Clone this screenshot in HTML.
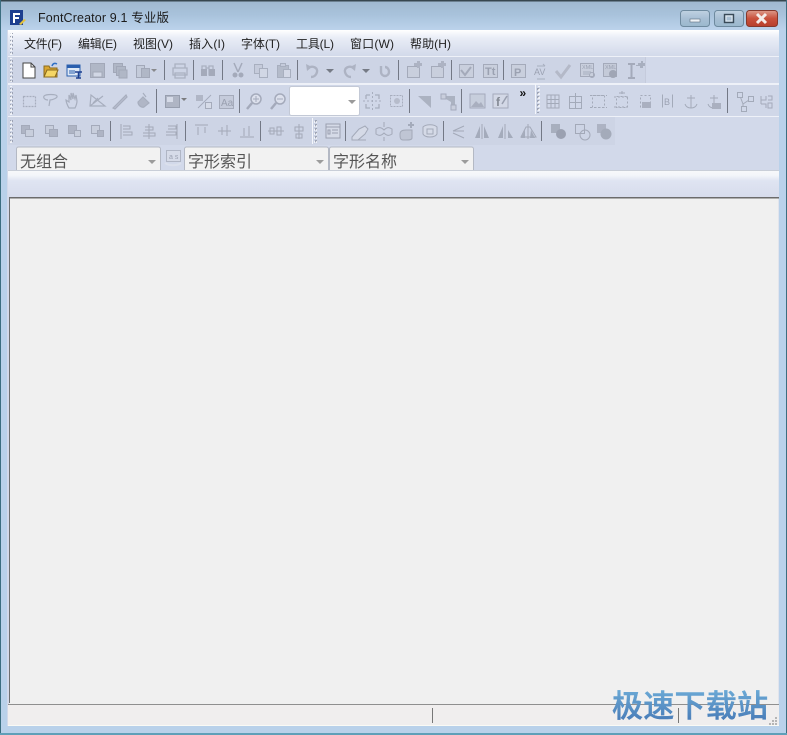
<!DOCTYPE html>
<html><head><meta charset="utf-8"><style>
html,body{margin:0;padding:0;background:#b9d1ea}
svg{display:block;filter:blur(.35px)}
text{font-family:"Liberation Sans","Noto Sans CJK SC",sans-serif}
</style></head><body>
<svg xmlns="http://www.w3.org/2000/svg" width="787" height="735" viewBox="0 0 787 735">
<defs>
<linearGradient id="tb" x1="0" y1="0" x2="0" y2="1"><stop offset="0" stop-color="#9fb8cf"/><stop offset=".5" stop-color="#a9c3dc"/><stop offset="1" stop-color="#bcd3ec"/></linearGradient>
<linearGradient id="mb" x1="0" y1="0" x2="0" y2="1"><stop offset="0" stop-color="#ffffff"/><stop offset=".3" stop-color="#e9edf6"/><stop offset="1" stop-color="#d2d9ea"/></linearGradient>
<linearGradient id="bd" x1="0" y1="0" x2="0" y2="1"><stop offset="0" stop-color="#f8f9fb"/><stop offset=".2" stop-color="#f3f5fa"/><stop offset=".4" stop-color="#dfe4f2"/><stop offset="1" stop-color="#d7dcec"/></linearGradient>
<linearGradient id="wm" x1="0" y1="0" x2="0" y2="1"><stop offset="0" stop-color="#74b6de"/><stop offset="1" stop-color="#4475b3"/></linearGradient>
<linearGradient id="btn" x1="0" y1="0" x2="0" y2="1"><stop offset="0" stop-color="#c0d2e2"/><stop offset=".5" stop-color="#a8bfd4"/><stop offset="1" stop-color="#9ab8cd"/></linearGradient>
<linearGradient id="cl" x1="0" y1="0" x2="0" y2="1"><stop offset="0" stop-color="#dd9a8a"/><stop offset=".5" stop-color="#c9513c"/><stop offset="1" stop-color="#b8402c"/></linearGradient>
<pattern id="gr" width="3" height="4" patternUnits="userSpaceOnUse"><rect width="2" height="2" fill="#9ea4b4"/><rect x="1" y="1" width="2" height="2" fill="#fff" opacity=".7"/></pattern>
</defs>

<!-- frame -->
<rect width="787" height="735" fill="#b9d1ea"/>
<rect width="787" height="30" fill="url(#tb)"/>
<rect x="0" y="0" width="787" height="1.5" fill="#37474f"/>
<rect x="0" y="0" width="1" height="735" fill="#3c6e80"/>
<rect x="786" y="0" width="1" height="735" fill="#3c6e80"/>
<rect x="0" y="733" width="787" height="2" fill="#5f9fb8"/>
<rect x="7" y="30" width="772" height="696" fill="#d2d9ea"/>

<!-- app icon -->
<rect x="10" y="10" width="13" height="15" fill="#1d3f8f"/>
<path d="M13 13h7v2h-5v2h4v2h-4v4h-2z" fill="#fff"/>
<path d="M19 24l5-5 2 1-5 5z" fill="#e4c33f"/>
<text x="38" y="22" font-size="12.500" fill="#1c1c1c" textLength="131" lengthAdjust="spacing">FontCreator 9.1 专业版</text>

<!-- window buttons -->
<rect x="680.500" y="10.500" width="29" height="16" rx="3" fill="url(#btn)" stroke="#6e8a9f"/>
<rect x="690" y="19" width="10" height="3" fill="#eef3f7" stroke="#5a6d7d" stroke-width=".6"/>
<rect x="714.500" y="10.500" width="29" height="16" rx="3" fill="url(#btn)" stroke="#6e8a9f"/>
<rect x="724.500" y="14.500" width="9" height="8" fill="none" stroke="#394a58" stroke-width="1.400"/>
<rect x="726" y="16" width="6" height="5" fill="none" stroke="#e8eef3" stroke-width="1"/>
<rect x="746.500" y="10.500" width="31" height="16" rx="3" fill="url(#cl)" stroke="#86382b"/>
<path d="M757 14l9 9M766 14l-9 9" stroke="#f4ece9" stroke-width="3"/>

<!-- menu -->
<rect x="8" y="30" width="771" height="26" fill="url(#mb)"/>
<rect x="10" y="33" width="3" height="22" fill="url(#gr)"/>
<g font-size="12" fill="#222">
<text x="24" y="48" textLength="38">文件(F)</text>
<text x="78" y="48" textLength="39">编辑(E)</text>
<text x="133" y="48" textLength="40">视图(V)</text>
<text x="189" y="48" textLength="36">插入(I)</text>
<text x="241" y="48" textLength="39">字体(T)</text>
<text x="296" y="48" textLength="38">工具(L)</text>
<text x="350" y="48" textLength="44">窗口(W)</text>
<text x="410" y="48" textLength="41">帮助(H)</text>
</g>

<!-- toolbar bands -->
<rect x="8" y="56" width="771" height="1" fill="#eef1f8"/>
<rect x="8" y="83" width="771" height="2" fill="#eef1f8"/>
<rect x="8" y="57" width="638" height="26" fill="#cdd4e5"/>
<rect x="645" y="57" width="1" height="26" fill="#c5cbdc"/>
<rect x="8" y="85" width="771" height="32" fill="#d0d7e8"/>
<rect x="8" y="116" width="771" height="1" fill="#eef1f8"/>
<rect x="8" y="117" width="607" height="28" fill="#cdd4e5"/>
<rect x="10" y="58" width="3" height="24" fill="url(#gr)"/>
<rect x="10" y="86" width="3" height="29" fill="url(#gr)"/>
<rect x="10" y="119" width="3" height="24" fill="url(#gr)"/>
<rect x="10" y="148" width="3" height="20" fill="url(#gr)"/>
<rect x="535" y="84" width="1" height="30" fill="#f4f6fb"/>
<rect x="537" y="86" width="3" height="27" fill="url(#gr)"/>
<rect x="312" y="118" width="1" height="26" fill="#f4f6fb"/>
<rect x="314" y="119" width="3" height="24" fill="url(#gr)"/>

<!-- separators -->
<g fill="#737885">
<rect x="164" y="60" width="1" height="20"/><rect x="193" y="60" width="1" height="20"/><rect x="222" y="60" width="1" height="20"/><rect x="297" y="60" width="1" height="20"/><rect x="398" y="60" width="1" height="20"/><rect x="451" y="60" width="1" height="20"/><rect x="503" y="60" width="1" height="20"/>
<rect x="156" y="89" width="1" height="24"/><rect x="239" y="89" width="1" height="24"/><rect x="409" y="89" width="1" height="24"/><rect x="461" y="89" width="1" height="24"/><rect x="727" y="88" width="1" height="25"/>
<rect x="110" y="121" width="1" height="20"/><rect x="185" y="121" width="1" height="20"/><rect x="260" y="121" width="1" height="20"/><rect x="345" y="121" width="1" height="20"/><rect x="443" y="121" width="1" height="20"/><rect x="541" y="121" width="1" height="20"/>
</g>

<!-- Row 1 icons -->
<path d="M23 63h8l4 4v11H23z" fill="#fff" stroke="#444"/><path d="M31 63v4h4" fill="none" stroke="#444"/>
<path d="M44 77V66h5l1 2h7v9z" fill="#d9a52f" stroke="#8a6a1d"/><path d="M44 77l3-7h11l-3 7z" fill="#f5d665" stroke="#8a6a1d"/><path d="M52 66c1-3 3-3 5-2" fill="none" stroke="#2d6fc4" stroke-width="1.500"/>
<rect x="67" y="65" width="13" height="11" fill="#dfe9f6" stroke="#2a5fae"/><rect x="67" y="65" width="13" height="3" fill="#2a5fae"/><path d="M69 71h6M69 73h6" stroke="#2a5fae"/><path d="M75 72h7M78.500 72v6M76 78h5" stroke="#1d3f8f" stroke-width="1.500"/>
<g opacity=".8">
<g fill="#aab0bf" stroke="#989eae">
<rect x="90.500" y="63.500" width="14" height="14"/><rect x="93" y="72" width="9" height="5" fill="#d2d8e6"/>
<rect x="113.500" y="63.500" width="9" height="9"/><rect x="116.500" y="66.500" width="9" height="9"/><rect x="119" y="70" width="8" height="8"/>
<rect x="136.500" y="65.500" width="8" height="12" fill="#c3c9d8"/><rect x="141.500" y="68.500" width="8" height="9"/>
</g>
<path d="M151 69h6l-3 3z" fill="#777"/>
<g fill="none" stroke="#a2a8b8" stroke-width="1.300">
<path d="M175 68v-4h10v4M173 68h14v7h-14zM175 73h10v5h-10z"/>
<path d="M202 66h4v9h-4zM209 66h4v9h-4zM206 68h3"/>
</g>
<rect x="201" y="69" width="6" height="7" fill="#9aa0b0"/><rect x="209" y="69" width="6" height="7" fill="#9aa0b0"/>
<path d="M234 63l4 9M242 63l-4 9" stroke="#9aa0b0" stroke-width="1.500"/><circle cx="235" cy="75" r="2.500" fill="#9aa0b0"/><circle cx="241" cy="75" r="2.500" fill="#9aa0b0"/>
<g fill="#c4cad9" stroke="#a0a6b6"><rect x="254.500" y="64.500" width="8" height="9"/><rect x="259.500" y="68.500" width="8" height="9" fill="#d2d8e6"/>
<rect x="277.500" y="65.500" width="11" height="12" fill="#afb5c4"/><rect x="280.500" y="63.500" width="5" height="3"/><rect x="283.500" y="69.500" width="7" height="8" fill="#d6dbe8"/></g>
<g fill="none" stroke="#a6acbb" stroke-width="2.400">
<path d="M308 68c5-3 10 0 9 4s-4 5-6 5"/><path d="M354 68c-5-3-10 0-9 4s4 5 6 5"/><path d="M381 66v6a4 4 0 0 0 8 0c0-3-2-5-4-5"/></g>
<path d="M306 64l1 7 5-4zM356 64l-1 7-5-4z" fill="#a6acbb"/>
<path d="M326 69h8l-4 4zM362 69h8l-4 4z" fill="#61666f"/>
<!-- note icons -->
<g fill="#c9cfdc" stroke="#9aa0b0">
<rect x="407.500" y="66.500" width="12" height="11"/><rect x="431.500" y="66.500" width="12" height="11"/>
<rect x="459.500" y="64.500" width="14" height="13"/><rect x="483.500" y="64.500" width="14" height="13"/>
<rect x="511.500" y="64.500" width="14" height="13"/>
<rect x="580.500" y="63.500" width="13" height="13"/><rect x="603.500" y="63.500" width="13" height="13" fill="#c2c8d6"/>
</g>
<path d="M414 66v-3h3v-2h3v2h2v3h-2v2h-3v-2zM438 66v-3h3v-2h3v2h2v3h-2v2h-3v-2z" fill="#a6acbb"/>
<path d="M461 70l4 5 6-8" fill="none" stroke="#9aa0b0" stroke-width="2"/>
<g font-size="11" fill="#8f95a5" font-weight="bold" font-family="Liberation Serif"><text x="485" y="75">Tt</text><text x="514" y="76">P</text></g>
<text x="534" y="75" font-size="9" fill="#8f95a5">AV</text>
<path d="M556 71l5 6 9-12" fill="none" stroke="#aeb3c1" stroke-width="3"/>
<path d="M537 66h8M545 66l-2-2M537 79h8" stroke="#a0a6b6" fill="none"/>
<text x="582" y="69" font-size="5.500" fill="#8f95a5">XML</text><text x="605" y="69" font-size="5.500" fill="#8f95a5">XML</text>
<path d="M583 72h8M583 74h6" stroke="#a0a6b6"/><circle cx="592" cy="75" r="2.500" fill="none" stroke="#9aa0b0"/>
<path d="M628 64h7M631.500 64v14M628 78h7" stroke="#9aa0b0" stroke-width="2" fill="none"/><path d="M636 65h2v-2h3v-2h2v2h2v3h-2v2h-3v-2h-4z" fill="#a0a6b6"/>
<circle cx="613" cy="74" r="4" fill="#959baa"/>

<!-- Row 2 icons -->
<g fill="none" stroke="#9ea4b4" stroke-width="1.200">
<rect x="23.500" y="96.500" width="12" height="10" stroke-dasharray="2 1"/>
<path d="M44 96c2-2 12-2 13 0s-5 4-7 4l-1 6M48 100c-3 0-5-2-4-4"/>
<path d="M69 108c-2-3-3-7-3-8l3 2v-7l2 5v-7l2 6v-6l2 6 1-4 1 6c0 3-1 5-2 7z"/>
<path d="M90 106h15l-14-11zM90 106l13-10M93 103l5-5"/>
<path d="M113 108l8-8 5-5 1 2-5 5-7 7z" fill="#b3b9c8"/>
<path d="M138 102l5-5 6 6-5 4c-3 1-6-2-6-5z" fill="#a9afbe"/><path d="M143 93l3 4"/>
</g>
<rect x="165.500" y="95.500" width="14" height="12" fill="#a7adbc" stroke="#8a90a0"/><rect x="167" y="97" width="6" height="5" fill="#d8dde9"/>
<path d="M181 98h6l-3 3z" fill="#666"/>
<rect x="196" y="95" width="7" height="6" fill="#a9afbe"/><rect x="205.500" y="102.500" width="6" height="6" fill="#d8dde9" stroke="#9ba1b1"/><path d="M211 95l-13 13" stroke="#9ba1b1"/>
<rect x="219.500" y="95.500" width="14" height="13" fill="#c3c9d8" stroke="#9ba1b1"/><text x="221" y="106" font-size="10" fill="#8d93a3">Aa</text>
<circle cx="256" cy="99" r="5" fill="#dfe3ee" stroke="#9aa0b0" stroke-width="1.500"/><path d="M252 103l-5 6" stroke="#9aa0b0" stroke-width="2.500"/><path d="M253 99h6M256 96v6" stroke="#9aa0b0"/>
<circle cx="280" cy="99" r="5" fill="#dfe3ee" stroke="#9aa0b0" stroke-width="1.500"/><path d="M276 103l-5 6" stroke="#9aa0b0" stroke-width="2.500"/><path d="M277 99h6" stroke="#9aa0b0"/>
<g fill="none" stroke="#9ea4b4">
<path d="M366 95h4M375 95h4v4M379 104v4h-4M370 108h-4v-4M366 99v-4" stroke-width="1.300"/><path d="M372.500 92v18M363 101h18" stroke-dasharray="2 2"/>
<rect x="390.500" y="95.500" width="12" height="11" stroke-dasharray="2 1"/>
</g>
<circle cx="397" cy="101" r="3" fill="#b0b6c5"/>
<path d="M418 96h13v12z" fill="#a3a9b8"/>
<path d="M441 96h14v12h-4v-6z" fill="#a3a9b8"/><rect x="441" y="94" width="5" height="5" fill="#c8cdda" stroke="#9aa0b0"/><rect x="451" y="105" width="5" height="5" fill="#c8cdda" stroke="#9aa0b0"/>
<rect x="470" y="94" width="15" height="14" fill="#c6ccda" stroke="#9aa0b0"/><path d="M471 107l5-6 3 3 2-2 3 5z" fill="#a0a6b6"/>
<rect x="493" y="94" width="15" height="14" fill="#d4d9e6" stroke="#9aa0b0"/><text x="496" y="106" font-size="12" font-weight="bold" fill="#71767f" font-family="Liberation Serif">f</text><path d="M502 104l5-8" stroke="#8c92a1" stroke-width="1.500"/>
<g fill="none" stroke="#999fae">
<path d="M547 95h12v13h-12zM551 95v13M555 95v13M547 99.500h12M547 103.500h12"/>
<path d="M569.500 96.500h12v12h-12zM575.500 93v16M569.500 102.500h12"/>
<path d="M592.500 95.500h12v12h-12zM590 95.500h17M590 107.500h17" stroke-dasharray="2 2"/>
<path d="M616.500 96.500h11v11h-11zM614 97h16M614 107h16" stroke-dasharray="2 2"/><path d="M622 91v3M619 93h6"/>
<path d="M640.500 95.500h10v12h-10z" stroke-dasharray="2 2"/>
<path d="M662.500 94.500v13M672.500 94.500v13"/>
<path d="M691 95v13M687 98h8M685 104c1 3 3 4 6 4s5-1 6-4"/>
<path d="M714 95v13M710 98h8M708 104c1 3 3 4 6 4s5-1 6-4"/>
<path d="M740 96l3 8 6-4M743 104v3"/><rect x="737.500" y="92.500" width="5" height="5" fill="#d0d7e8"/><rect x="748.500" y="96.500" width="5" height="5" fill="#d0d7e8"/><rect x="741.500" y="106.500" width="5" height="5" fill="#d0d7e8"/>
<path d="M761 96v8M766 96v4h-5M768 96h4v4h-4M768 103h4v5h-4zM761 104h5v4"/>
</g>
<rect x="642" y="102" width="9" height="6" fill="#a1a7b7"/><rect x="712" y="103" width="9" height="6" fill="#a1a7b7"/>
<text x="664" y="105" font-size="9" fill="#8f95a5">B</text>

<!-- Row 3 icons -->
<g fill="#c7cddb" stroke="#9aa0b0"><rect x="21.500" y="125.500" width="8" height="8" fill="#a7adbc"/><rect x="25.500" y="129.500" width="8" height="7"/>
<rect x="45.500" y="125.500" width="8" height="8"/><rect x="49.500" y="129.500" width="8" height="7" fill="#a7adbc"/>
<rect x="68.500" y="125.500" width="8" height="8" fill="#a7adbc"/><rect x="74.500" y="130.500" width="6" height="6"/>
<rect x="91.500" y="125.500" width="8" height="8"/><rect x="97.500" y="130.500" width="6" height="6" fill="#a7adbc"/></g>
<g fill="none" stroke="#999fae">
<path d="M121 124v15M123 126h7v3h-7M123 132h9v3h-9"/>
<path d="M149 124v15M145 127h8v3h-8M143 133h12v3h-12" />
<path d="M177 124v15M168 126h8v3h-8M166 132h10v3h-10"/>
<path d="M195 125h13M198 127v8M205 127v6"/>
<path d="M218 131h13M222 127v8M227 125v11"/>
<path d="M240 137h14M244 128v8M249 126v10"/>
<path d="M268 131h16M270 128h4v6h-4zM277 127h4v8h-4z"/>
<path d="M299 124v15M295 127h8v4h-8zM296 134h6v4h-6z"/>
<path d="M352 137l7-8 6-3 3 3-3 5-7 6h-6z" fill="#d8dce8"/><path d="M352 140h14"/>
<path d="M376 129c3-2 5-2 8 1 3-3 5-3 8-1v5c-3 2-5 2-8-1-3 3-5 3-8 1zM384 122v5M384 137v4"/>
<path d="M400 134c0-3 3-4 6-4h6v8c0 2-3 2-6 2h-3c-3 0-3-3-3-6z" fill="#bcc2d0"/>
<path d="M423 127c3-3 11-3 14 0v7c-2 4-12 4-14 0zM427 129h6v5h-6z" fill="#d8dce8"/>
<path d="M453 131l11-5M453 131h11M453 133l11 5"/>
<path d="M521 137l5-10h4l6 10z"/>
<path d="M505 124v15M482 124v15M528 124v15"/>
<rect x="575.500" y="124.500" width="9" height="9"/>
<circle cx="585" cy="135" r="5"/>
</g>
<path d="M475 138l5-12v12zM484 138v-12l5 12zM498 138l5-12v12zM508 130v8h5zM521 138l4-8v8zM531 130l4 8h-5z" fill="#9ba1b1"/>
<rect x="326" y="124" width="14" height="14" fill="#d8dce8" stroke="#8e94a4"/><path d="M326 127h14M332 130h6M332 133h6M328 130h2v4h-2z" stroke="#8e94a4" fill="none"/>
<rect x="551" y="124" width="9" height="9" fill="#a0a6b5"/><circle cx="561" cy="134" r="5" fill="#8f95a5"/>
<rect x="597" y="124" width="9" height="9" fill="#a6acbb"/><circle cx="606" cy="134" r="5.500" fill="#9ba1b0"/>
<path d="M411 122v6M408 125h6" stroke="#9ba1b1" stroke-width="2"/>
</g>

<!-- combo box row 2 -->
<rect x="289.500" y="86.500" width="70" height="29" rx="2" fill="#fff" stroke="#c3c9d6"/>
<path d="M348 100h8l-4 4z" fill="#9a9a9a"/>
<text x="519.500" y="97" font-size="12" font-weight="bold" fill="#111">»</text>

<!-- Row 4 combos -->
<rect x="8" y="145" width="771" height="25" fill="#d2d9ea"/>
<g fill="#f2f2f2" stroke="#b4b9c4">
<path d="M16.500 171v-22a2 2 0 0 1 2-2h140a2 2 0 0 1 2 2v22"/>
<path d="M184.500 171v-22a2 2 0 0 1 2-2h140a2 2 0 0 1 2 2v22"/>
<path d="M329.500 171v-22a2 2 0 0 1 2-2h140a2 2 0 0 1 2 2v22"/>
</g>
<rect x="166.500" y="150.500" width="14" height="11" fill="#d6dbe8" stroke="#b0b6c5"/>
<path d="M165 163c4 3 12 3 16 0" stroke="#dbe0ec" stroke-width="2" fill="none"/>
<text x="169" y="159" font-size="7" fill="#9ba1b1">a s</text>
<path d="M148 160h8l-4 4zM316 160h8l-4 4zM461 160h8l-4 4z" fill="#9c9c9c"/>
<g font-size="16" fill="#555">
<text x="20" y="167">无组合</text>
<text x="188" y="167">字形索引</text>
<text x="333" y="167">字形名称</text>
</g>

<!-- band -->
<rect x="8" y="170" width="771" height="27" fill="url(#bd)"/>
<rect x="8" y="170" width="771" height="1" fill="#c9ced8"/>
<rect x="9" y="197" width="770" height="1.500" fill="#6b6b6b"/>

<!-- client -->
<rect x="9" y="198.500" width="769.500" height="505.500" fill="#f0f0f0"/>
<rect x="9" y="198" width="1" height="505" fill="#6f7072"/>
<rect x="8" y="704" width="771" height="1" fill="#8f8f8f"/>
<rect x="8" y="705" width="771" height="21" fill="#f0eeee"/>
<rect x="8" y="725" width="771" height="1" fill="#fafaf5"/>
<rect x="432" y="708" width="1" height="15" fill="#777"/>
<rect x="678" y="708" width="1" height="15" fill="#777"/>
<g fill="#b5b5b5"><rect x="775" y="717" width="2" height="2"/><rect x="772" y="720" width="2" height="2"/><rect x="775" y="720" width="2" height="2"/><rect x="769" y="723" width="2" height="2"/><rect x="772" y="723" width="2" height="2"/><rect x="775" y="723" width="2" height="2"/></g>

<!-- watermark -->
<text x="612" y="717" font-size="31" font-weight="500" fill="url(#wm)" stroke="url(#wm)" stroke-width=".5" textLength="156" style='font-family:"Noto Sans CJK SC",sans-serif'>极速下载站</text>
</svg>
</body></html>
